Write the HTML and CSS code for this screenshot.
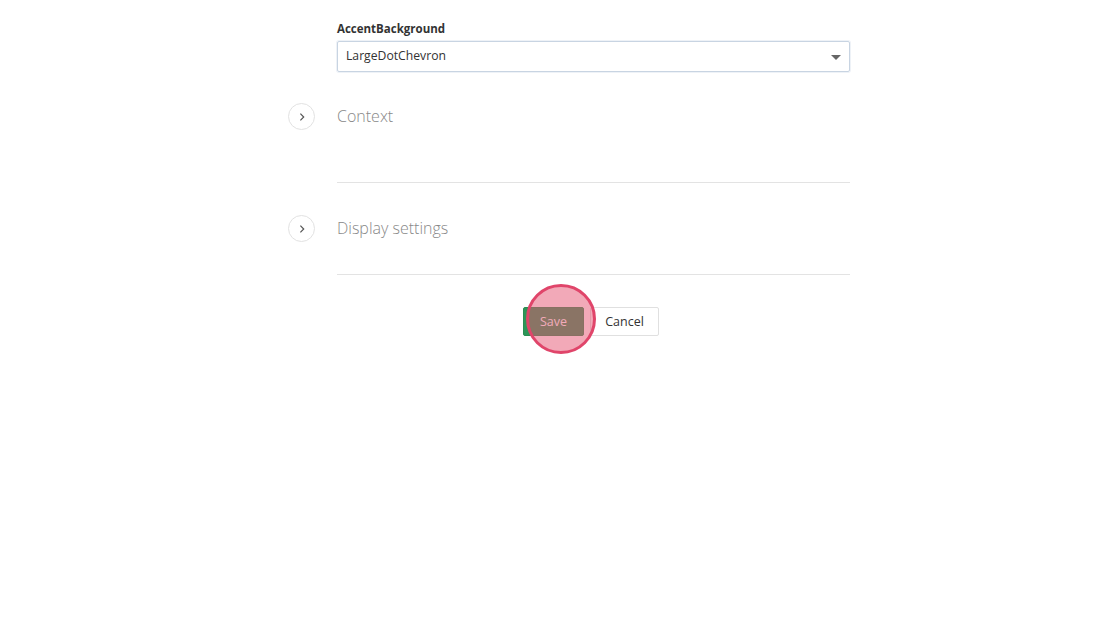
FILE: index.html
```html
<!DOCTYPE html>
<html>
<head>
<meta charset="utf-8">
<link rel="stylesheet" href="styles.css">
</head>
<body>
<div class="form">
  <div class="field">
    <label class="label">AccentBackground</label>
    <div class="select">
      <span>LargeDotChevron</span>
      <span class="caret"></span>
    </div>
  </div>

  <div class="section first">
    <div class="section-head">
      <span class="toggle"><svg width="10" height="10" viewBox="0 0 10 10"><path d="M3.4 1.6 L6.7 5 L3.4 8.4" fill="none" stroke="#555" stroke-width="1.2"/></svg></span>
      <span class="section-title">Context</span>
    </div>
    <div class="section-body"></div>
  </div>

  <div class="section second">
    <div class="section-head">
      <span class="toggle"><svg width="10" height="10" viewBox="0 0 10 10"><path d="M3.4 1.6 L6.7 5 L3.4 8.4" fill="none" stroke="#555" stroke-width="1.2"/></svg></span>
      <span class="section-title">Display settings</span>
    </div>
    <div class="section-body"></div>
  </div>

  <div class="actions">
    <button class="btn save">Save<span class="click-ring"></span></button>
    <button class="btn cancel">Cancel</button>
  </div>
</div>
</body>
</html>
```

FILE: styles.css
```css
* { box-sizing: border-box; }
html, body { margin: 0; padding: 0; background: #fff; }
body {
  font-family: "Open Sans", "Noto Sans", sans-serif;
  color: #333;
  width: 1120px;
  height: 626px;
  overflow: hidden;
}
.form {
  margin-left: 337px;
  width: 513px;
  padding-top: 21px;
}
.label {
  display: block;
  font-size: 11.5px;
  font-weight: 700;
  line-height: 16px;
  color: #333;
  margin-bottom: 4px;
}
.select {
  height: 31px;
  border: 1px solid #c8d4e2;
  border-radius: 2px;
  box-shadow: 0 0 0 1px #eef2f7;
  display: flex;
  align-items: center;
  justify-content: space-between;
  padding: 0 8px 2px 8px;
  font-size: 12.2px;
  color: #333;
}
.caret {
  width: 0; height: 0;
  border-left: 5px solid transparent;
  border-right: 5px solid transparent;
  border-top: 5px solid #666;
  margin-top: 3px;
}
.section {
  border-bottom: 1px solid #e3e3e3;
}
.section.first { margin-top: 31px; }
.section.second { margin-top: 32px; }
.section-head {
  display: flex;
  align-items: center;
  height: 26px;
  position: relative;
}
.toggle {
  position: absolute;
  left: -49px;
  top: 0;
  width: 27px;
  height: 27px;
  border: 1px solid #e2e2e2;
  border-radius: 50%;
  display: flex;
  align-items: center;
  justify-content: center;
  background: #fff;
}
.toggle svg { display: block; }
.section-title {
  font-size: 16px;
  font-weight: 300;
  color: #888;
  margin-top: 0;
}
.first .section-body { height: 53px; }
.second .section-body { height: 33px; }
.actions {
  display: flex;
  justify-content: center;
  gap: 6px;
  margin-top: 32px;
  padding-right: 5px;
}
.btn {
  font-family: inherit;
  font-size: 12.5px;
  height: 29px;
  border-radius: 2px;
  padding: 0;
  cursor: pointer;
}
.save {
  position: relative;
  width: 61px;
  background: #2e9558;
  border: 1px solid #2a8d52;
  color: #fff;
}
.cancel {
  width: 69px;
  background: #fff;
  border: 1px solid #e0e0e0;
  color: #333;
}
.click-ring {
  position: absolute;
  left: 2px;
  top: -24px;
  width: 70px;
  height: 70px;
  border-radius: 50%;
  background: rgba(229, 83, 113, 0.5);
  border: 3px solid #e0456a;
  pointer-events: none;
}
```
